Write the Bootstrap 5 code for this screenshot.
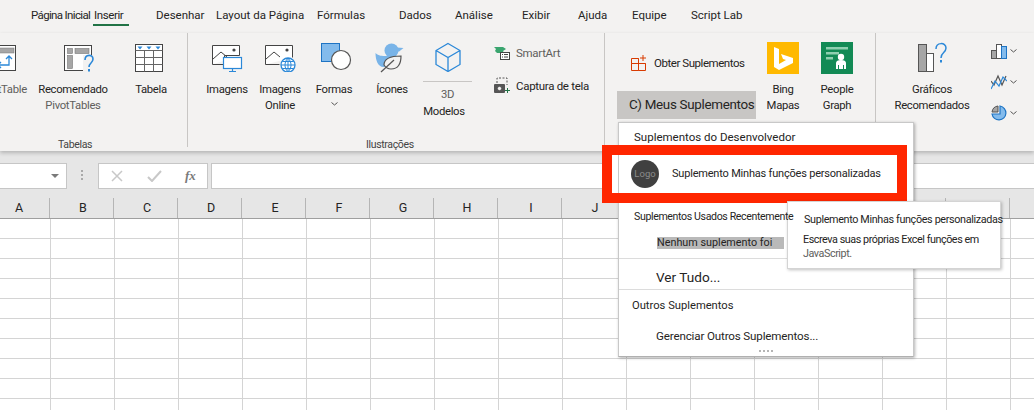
<!DOCTYPE html>
<html lang="pt-BR">
<head>
    <meta charset="UTF-8">
    <title>Excel - Inserir</title>
    <link href="https://cdn.jsdelivr.net/npm/bootstrap@5.3.0/dist/css/bootstrap.min.css" rel="stylesheet">
    <style>
        html, body { height: 410px; overflow: hidden; }
        body { background: #fff; color: #252423; font-family: Roboto, "Liberation Sans", sans-serif; font-size: 12px; line-height: 16px; position: relative; width: 1034px; }

        /* tabs */
        .tab-strip { display: grid; grid-template-columns: 63px 62px 60px 101px 82px 56px 67px 56px 54px 59px 80px; height: 33px; padding-left: 31px; background: #f3f2f1; }
        .tab-item { padding-top: 7px; white-space: nowrap; font-size: 11.5px; }
        .tab-first { letter-spacing: -.65px; }
        .tab-item.is-active { position: relative; letter-spacing: -.4px; }
        .tab-item.is-active::after { content: ""; position: absolute; left: -1px; top: 24px; width: 36px; height: 2px; background: #217346; }

        /* ribbon */
        .ribbon { display: flex; height: 118px; background: #f3f2f1; box-shadow: 0 2px 4px rgba(0,0,0,.22); position: relative; }
        .rib-group { position: relative; display: flex; flex: none; height: 114px; }
        .rib-group::after { content: ""; position: absolute; right: 0; top: 0; bottom: 0; width: 1px; background: #c8c6c4; }
        .grp-tables { width: 188px; }
        .grp-illus { width: 417px; }
        .grp-addins { width: 271px; }
        .grp-charts { width: 158px; }
        .grp-charts::after { display: none; }
        .grp-label { position: absolute; top: 104px; font-size: 10.5px; letter-spacing: -.35px; color: #444; }
        .label-tables { left: 58px; }
        .label-illus { left: 178px; }
        .cmd { flex: none; padding-top: 9px; text-align: center; white-space: nowrap; font-size: 11.3px; letter-spacing: -.3px; }
        .cmd-icon { display: block; height: 40px; }
        .cmd svg { display: block; margin: 0 auto; }
        .muted-text { color: #605e5c; }
        .cmd-pivot { width: 70px; margin-left: -33px; }
        .cmd-reco { width: 72px; }
        .cmd-reco svg { margin-left: 27px; }
        .cmd-table { width: 40px; margin-left: 22px; }
        .cmd-table svg { margin-left: 4px; }
        .cmd-table .cmd-icon { padding-top: 2px; }
        .cmd-pics { width: 50px; margin-left: 14px; }
        .cmd-online { width: 50px; margin-left: 3px; }
        .cmd-shapes { width: 50px; margin-left: 4px; }
        .cmd-shapes .cmd-icon svg { margin-left: 12px; }
        .cmd-shapes .chev-down { margin-top: 4px; }
        .cmd-icons { width: 50px; margin-left: 8px; }
        .cmd-icons svg { margin-left: 8px; }
        .cmd-3d { width: 49px; margin-left: 6px; }
        .cmd-3d .cmd-icon { height: 39px; }
        .model-rule { border-top: 1px solid #c8c6c4; margin-bottom: 5px; }
        .model-name { display: block; margin-top: 1px; margin-left: -7px; }
        .side-col { flex: none; margin-left: 22px; padding-top: 11px; }
        .side-row { display: flex; align-items: center; gap: 6px; height: 17px; margin-bottom: 16px; white-space: nowrap; font-size: 11.5px; letter-spacing: -.3px; }
        .addin-col { flex: none; width: 139px; margin-left: 12px; padding-top: 21px; }
        .addin-get { display: flex; align-items: center; gap: 7px; padding-left: 14px; height: 18px; font-size: 11.5px; letter-spacing: -.45px; white-space: nowrap; }
        .addin-mine { display: block; margin-top: 19px; width: 139px; height: 28px; padding: 0 0 0 12px; background: #c8c6c4; line-height: 28px; font-size: 13.4px; letter-spacing: -.3px; white-space: nowrap; color: #252423; }
        .cmd-bing { width: 50px; margin-left: 2px; }
        .cmd-people { width: 50px; margin-left: 4px; }
        .cmd-reco-chart { width: 80px; margin-left: 16px; }
        .cmd-reco-chart svg { margin-left: 26px; }
        .chart-col { flex: none; margin-left: 19px; padding-top: 2px; }
        .chart-row { display: flex; align-items: center; gap: 3px; height: 31px; }

        /* formula bar */
        .formula-bar { display: flex; align-items: center; height: 47px; padding-top: 11px; padding-bottom: 9px; background: #e6e6e6; }
        .name-box, .fx-box, .fx-input { height: 26px; background: #fff; border: 1px solid #c6c6c6; flex: none; }
        .name-box { width: 68px; margin-left: -1px; display: flex; align-items: center; justify-content: flex-end; padding-right: 7px; }
        .drop-tri { width: 0; height: 0; border-left: 4px solid transparent; border-right: 4px solid transparent; border-top: 4px solid #7a7a7a; }
        .grip-dots { width: 2px; height: 11px; margin: 0 15px 0 14px; background-image: linear-gradient(#a9a9a9 2px, transparent 2px); background-size: 2px 4px; flex: none; }
        .fx-box { width: 110px; display: flex; align-items: center; padding-left: 12px; gap: 24px; }
        .fx-sign { font-family: "Liberation Serif", serif; font-style: italic; font-weight: 700; font-size: 13px; color: #7a7a7a; margin-left: -1px; }
        .fx-input { flex: 1; margin-left: 3px; margin-right: -1px; }

        /* sheet */
        .col-head { display: flex; height: 21px; margin-left: -14px; background: #e6e6e6; border-bottom: 1px solid #9f9f9f; overflow: hidden; }
        .col-cell { flex: none; width: 64px; height: 20px; padding-left: 3px; text-align: center; line-height: 20px; border-right: 1px solid #b5b5b5; font-size: 12.5px; }
        .sheet-body { height: 192px; background-color: #fff; background-image: linear-gradient(to right, transparent 63px, #d4d4d4 63px), linear-gradient(to bottom, transparent 19px, #d4d4d4 19px); background-size: 64px 20px; background-position: -13px 0; }

        /* add-in menu */
        .addin-menu { position: absolute; display: block; left: 618px; top: 122px; z-index: auto; width: 296px; height: 235px; padding: 0; margin: 0; border: 1px solid #c8c8c8; border-bottom-color: #b0b0b0; border-radius: 0; background: #fff; box-shadow: 1px 1px 3px rgba(0,0,0,.3); font-size: 11.5px; color: #252423; }
        .menu-head { padding-left: 15px; white-space: nowrap; }
        .head-dev { height: 29px; line-height: 29px; }
        .menu-logo-row { display: flex; align-items: center; height: 43px; padding-left: 12px; gap: 13px; font-size: 11px; letter-spacing: -.2px; white-space: nowrap; }
        .logo-disc { flex: none; width: 28px; height: 28px; border-radius: 50%; background: #404040; color: #8c8c8c; font-size: 9.5px; line-height: 28px; text-align: center; letter-spacing: 0; }
        /* this heading runs over the tooltip's left edge in the picture */
        .head-recent { position: relative; z-index: 5; height: 26px; line-height: 26px; margin-top: 9px; font-size: 10.6px; letter-spacing: -.37px; }
        .menu-empty { height: 28px; padding: 7px 0 0 38px; }
        .empty-mark { display: block; width: 127px; height: 12px; line-height: 12px; background: #b9b9b9; white-space: nowrap; font-size: 10.8px; }
        .menu-sep { margin: 0; border-top: 1px solid #dcdcdc; opacity: 1; }
        .menu-all { height: 30px; line-height: 36px; padding-left: 37px; font-size: 13.6px; }
        .head-other { height: 30px; line-height: 32px; padding-left: 13px; font-size: 11.2px; }
        .menu-manage { height: 28px; line-height: 32px; padding-left: 37px; font-size: 11.6px; letter-spacing: -.15px; white-space: nowrap; }
        .menu-grip { display: flex; justify-content: center; gap: 2px; margin-top: 2px; margin-left: -1px; }
        .menu-grip i { display: block; width: 2px; height: 2px; background: #b5b5b5; }

        .red-frame { position: absolute; left: 602px; top: 145px; width: 305px; height: 58px; border: 10px solid #ff2600; z-index: 3; pointer-events: none; }
        .red-frame::before { content: ""; position: absolute; left: 0; top: 0; bottom: 0; width: 6px; background: #fff; }

        .addin-tip { position: absolute; left: 787px; top: 201px; width: 214px; height: 68px; padding: 11px 0 0 15px; background: #fff; border: 1px solid #d4d4d4; box-shadow: 1px 1px 3px rgba(0,0,0,.25); font-size: 10.8px; line-height: 14px; letter-spacing: -.45px; z-index: 4; white-space: nowrap; }
        .tip-title { margin-bottom: 6px; margin-left: 1px; letter-spacing: -.35px; }
    </style>
</head>
<body>
    <div class="tab-strip">
        <div class="tab-item tab-first">Página Inicial</div>
        <div class="tab-item is-active">Inserir</div>
        <div class="tab-item">Desenhar</div>
        <div class="tab-item">Layout da Página</div>
        <div class="tab-item">Fórmulas</div>
        <div class="tab-item">Dados</div>
        <div class="tab-item">Análise</div>
        <div class="tab-item">Exibir</div>
        <div class="tab-item">Ajuda</div>
        <div class="tab-item">Equipe</div>
        <div class="tab-item">Script Lab</div>
    </div>

    <div class="ribbon">
        <div class="rib-group grp-tables">
            <div class="cmd cmd-pivot">
                <span class="cmd-icon"><svg width="30" height="30" viewBox="0 0 30 30"><rect x=".5" y="3.5" width="28" height="25" fill="#fff" stroke="#444"/><rect x="3" y="6" width="24" height="5" fill="#a6a6a6" stroke="#777" stroke-width=".5"/><path d="M22 14v9h-11M11 23l3-3M11 23l3 3M19 17l3-3 3 3" fill="none" stroke="#2b88d8" stroke-width="1.3"/></svg></span>
                <span class="muted-text">PivotTable</span>
            </div>
            <div class="cmd cmd-reco">
                <span class="cmd-icon"><svg width="31" height="31" viewBox="0 0 31 31"><rect x=".5" y="3.5" width="27" height="25" fill="#fff" stroke="#444"/><rect x="3.5" y="6.5" width="5" height="5" fill="#a6a6a6" stroke="#777" stroke-width=".6"/><rect x="11" y="6.5" width="14" height="5" fill="#a6a6a6" stroke="#777" stroke-width=".6"/><rect x="3.5" y="13.5" width="5" height="13" fill="#a6a6a6" stroke="#777" stroke-width=".6"/><rect x="19" y="13" width="12" height="18" fill="#f3f2f1"/><path d="M21 18c0-6 8-6 8-1 0 4-4 4-4 8" fill="none" stroke="#2b88d8" stroke-width="1.6"/><rect x="24" y="27" width="2" height="2.5" fill="#2b88d8"/></svg></span>
                Recomendado<br><span class="muted-text">PivotTables</span>
            </div>
            <div class="cmd cmd-table">
                <span class="cmd-icon"><svg width="28" height="28" viewBox="0 0 28 28"><rect x=".5" y=".5" width="27" height="27" fill="#fff" stroke="#444"/><path d="M.5 6.5h27M.5 13.5h27M.5 20.5h27M9.5 6.5v21M18.5 6.5v21" fill="none" stroke="#666"/><path d="M2.5 2.5h5l-2.500 3zM11.500 2.500h5l-2.500 3zM20.500 2.500h5l-2.500 3z" fill="#2b88d8"/></svg></span>
                Tabela
            </div>
            <div class="grp-label label-tables">Tabelas</div>
        </div>

        <div class="rib-group grp-illus">
            <div class="cmd cmd-pics">
                <span class="cmd-icon"><svg width="31" height="30" viewBox="0 0 31 30"><path d="M.5 22.500V3.500h27v10" fill="#fff" stroke="#444"/><path d="M.5 22.500h12v-9h15" fill="none" stroke="#444"/><path d="M1 17l8-7 6 5" fill="none" stroke="#444"/><circle cx="22" cy="8" r="1.600" fill="#444"/><rect x="11.500" y="15.500" width="18" height="11" fill="#fff" stroke="#2b88d8" stroke-width="1.200"/><path d="M20.500 26.500v3M17 29.500h7" stroke="#2b88d8" stroke-width="1.200"/></svg></span>
                <span>Imagens</span>
            </div>
            <div class="cmd cmd-online">
                <span class="cmd-icon"><svg width="31" height="30" viewBox="0 0 31 30"><path d="M.5 22.500V3.500h27v12M.5 22.500h14" fill="#fff" stroke="#444"/><path d="M1 17l8-7 6 5" fill="none" stroke="#444"/><circle cx="22" cy="8" r="1.600" fill="#444"/><circle cx="23" cy="23" r="7" fill="#fff" stroke="#2b88d8" stroke-width="1.300"/><path d="M16 23h14M23 16v14M17.500 19.500h11M17.500 26.500h11M23 16c-4 4-4 10 0 14M23 16c4 4 4 10 0 14" fill="none" stroke="#2b88d8"/></svg></span>
                Imagens<br>Online
            </div>
            <div class="cmd cmd-shapes">
                <span class="cmd-icon"><svg width="32" height="30" viewBox="0 0 32 30"><rect x=".5" y="1.500" width="18" height="18" fill="#83bbec" stroke="#1e74c4"/><circle cx="20" cy="18" r="9.500" fill="#fff" stroke="#555" stroke-width="1.200"/></svg></span>
                Formas<svg class="chev-down" width="7" height="4" viewBox="0 0 7 4"><path d="M.5.500l3 2.500 3-2.500" fill="none" stroke="#555"/></svg>
            </div>
            <div class="cmd cmd-icons">
                <span class="cmd-icon"><svg width="29" height="31" viewBox="0 0 29 31"><circle cx="16.500" cy="8.500" r="7" fill="#79b4e8"/><path d="M22 5.500l6.500.500-5 4z" fill="#79b4e8"/><path d="M.5 11c3 3 7 3 10 3h6l6 2c-2 5-8 9-14 9C3 25 .500 18 .500 11z" fill="#79b4e8"/><path d="M9 23c0-5 5-9 17-9 0 8-3 13-10 13-3 0-5-1-7-4z" fill="#f3f2f1" stroke="#555" stroke-width="1.200"/><path d="M6 30l13-12" stroke="#555" stroke-width="1.200"/></svg></span>
                Ícones
            </div>
            <div class="cmd cmd-3d">
                <span class="cmd-icon"><svg width="26" height="30" viewBox="0 0 26 30"><path d="M13 1.500l12 7v14l-12 7-12-7v-14zM1 8.500l12 7 12-7M13 15.500v14" fill="none" stroke="#2b88d8" stroke-width="1.300"/></svg></span>
                <div class="model-rule"></div>
                <span class="muted-text">3D</span>
                <span class="model-name">Modelos</span>
            </div>
            <div class="side-col">
                <div class="side-row muted-text"><svg width="16" height="14" viewBox="0 0 16 14"><path d="M0 1h9l3 2-3 2 1 2H3L1 5l1-2z" fill="#3aa56f"/><rect x="6.500" y="6.500" width="9" height="7" fill="#fff" stroke="#444"/><path d="M8 8.500h1M10 8.500h4M8 11h1M10 11h4" stroke="#444"/></svg>SmartArt</div>
                <div class="side-row"><svg width="16" height="17" viewBox="0 0 16 17"><path d="M3 6V1h10v7" fill="none" stroke="#555" stroke-dasharray="2 1.500"/><rect x="0" y="7" width="11" height="9" rx="1" fill="#555"/><circle cx="5.500" cy="11.500" r="2.200" fill="#f3f2f1" stroke="#555"/><path d="M13.500 11v5M11 13.500h5" stroke="#217346"/></svg>Captura de tela</div>
            </div>
            <div class="grp-label label-illus">Ilustrações</div>
        </div>

        <div class="rib-group grp-addins">
            <div class="addin-col">
                <div class="addin-get"><svg width="16" height="16" viewBox="0 0 16 16"><path d="M.5 3.500h7v5h-7zM.5 8.500h7v7h-7zM7.500 8.500h7v7h-7zM7.500 3.500v5h7M12 0v6M9 3h6" fill="none" stroke="#d83b01"/></svg>Obter Suplementos</div>
                <button type="button" class="btn addin-mine border-0 rounded-0 text-start">C) Meus Suplementos</button>
            </div>
            <div class="cmd cmd-bing">
                <span class="cmd-icon"><svg width="32" height="32" viewBox="0 0 32 32"><rect width="32" height="32" fill="#ffb900"/><path d="M7 5l5 2v15l7-4-3-1-2-5 12 4v5l-14 7-5-3z" fill="#fff"/></svg></span>
                Bing<br>Mapas
            </div>
            <div class="cmd cmd-people">
                <span class="cmd-icon"><svg width="32" height="32" viewBox="0 0 32 32"><rect width="32" height="32" fill="#128a55"/><path d="M5 5h22v2.500H5zM5 10h13v2.500H5zM5 15h7v2.500H5z" fill="#8fcfb0"/><circle cx="20" cy="15" r="3.200" fill="#fff"/><path d="M15 27v-6c0-2 2-3 5-3s5 1 5 3v6h-2v-4h-1v4h-4v-4h-1v4z" fill="#fff"/></svg></span>
                People<br>Graph
            </div>
        </div>

        <div class="rib-group grp-charts">
            <div class="cmd cmd-reco-chart">
                <span class="cmd-icon"><svg width="30" height="30" viewBox="0 0 30 30"><rect x=".5" y="2.500" width="8" height="27" fill="#a6a6a6" stroke="#555"/><rect x="8.500" y="11.500" width="7" height="18" fill="#fff" stroke="#555"/><path d="M18 7c0-7 10-7 10-1 0 5-5 4-5 10" fill="none" stroke="#2b88d8" stroke-width="1.500"/><rect x="22" y="18" width="2" height="2.500" fill="#2b88d8"/></svg></span>
                Gráficos<br>Recomendados
            </div>
            <div class="chart-col">
                <div class="chart-row"><svg width="16" height="16" viewBox="0 0 16 16"><rect x=".5" y="7.500" width="5" height="8" fill="#a6a6a6" stroke="#555"/><rect x="5.500" y="1.500" width="5" height="14" fill="#fff" stroke="#555"/><rect x="10.500" y="3.500" width="5" height="12" fill="#83bbec" stroke="#1e74c4"/></svg><svg width="7" height="4" viewBox="0 0 7 4"><path d="M.5.500l3 2.500 3-2.500" fill="none" stroke="#555"/></svg></div>
                <div class="chart-row"><svg width="16" height="16" viewBox="0 0 16 16"><path d="M0 7l3 4 4-9 4 9 4-9" fill="none" stroke="#555" stroke-width="1.200"/><path d="M0 15l4-8 4 5 4-9 4 4" fill="none" stroke="#2b88d8" stroke-width="1.200"/></svg><svg width="7" height="4" viewBox="0 0 7 4"><path d="M.5.500l3 2.500 3-2.500" fill="none" stroke="#555"/></svg></div>
                <div class="chart-row"><svg width="16" height="16" viewBox="0 0 16 16"><path d="M7 1a7 7 0 0 0-6 6h6z" fill="#a6a6a6" stroke="#555"/><path d="M9 1a7 7 0 1 1-8 8h8z" fill="#83bbec" stroke="#1e74c4" stroke-width="1.200"/></svg><svg width="7" height="4" viewBox="0 0 7 4"><path d="M.5.500l3 2.500 3-2.500" fill="none" stroke="#555"/></svg></div>
            </div>
        </div>
    </div>

    <div class="formula-bar">
        <div class="name-box"><span class="drop-tri"></span></div>
        <span class="grip-dots"></span>
        <div class="fx-box">
            <svg width="12" height="12" viewBox="0 0 12 12"><path d="M1 1l10 10M11 1L1 11" stroke="#c8c8c8" stroke-width="1.500"/></svg>
            <svg width="15" height="12" viewBox="0 0 15 12"><path d="M1 7l4 4 9-10" fill="none" stroke="#c8c8c8" stroke-width="2"/></svg>
            <span class="fx-sign">fx</span>
        </div>
        <div class="fx-input"></div>
    </div>

    <div class="col-head">
        <div class="col-cell">A</div><div class="col-cell">B</div><div class="col-cell">C</div><div class="col-cell">D</div>
        <div class="col-cell">E</div><div class="col-cell">F</div><div class="col-cell">G</div><div class="col-cell">H</div>
        <div class="col-cell">I</div><div class="col-cell">J</div><div class="col-cell">K</div><div class="col-cell">L</div>
        <div class="col-cell">M</div><div class="col-cell">N</div><div class="col-cell">O</div><div class="col-cell">P</div>
        <div class="col-cell">Q</div>
    </div>
    <div class="sheet-body"></div>

    <div class="dropdown-menu addin-menu">
        <div class="menu-head head-dev">Suplementos do Desenvolvedor</div>
        <div class="menu-logo-row"><span class="logo-disc">Logo</span>Suplemento Minhas funções personalizadas</div>
        <div class="menu-head head-recent">Suplementos Usados Recentemente</div>
        <div class="menu-empty"><span class="empty-mark">Nenhum suplemento foi</span></div>
        <hr class="menu-sep">
        <div class="menu-all">Ver Tudo...</div>
        <hr class="menu-sep">
        <div class="head-other">Outros Suplementos</div>
        <div class="menu-manage">Gerenciar Outros Suplementos...</div>
        <div class="menu-grip"><i></i><i></i><i></i><i></i></div>
    </div>
    <div class="red-frame"></div>
    <div class="addin-tip">
        <div class="tip-title">Suplemento Minhas funções personalizadas</div>
        <div>Escreva suas próprias Excel funções em</div>
        <div class="muted-text">JavaScript.</div>
    </div>

    <script src="https://cdn.jsdelivr.net/npm/bootstrap@5.3.0/dist/js/bootstrap.bundle.min.js"></script>
</body>
</html>
